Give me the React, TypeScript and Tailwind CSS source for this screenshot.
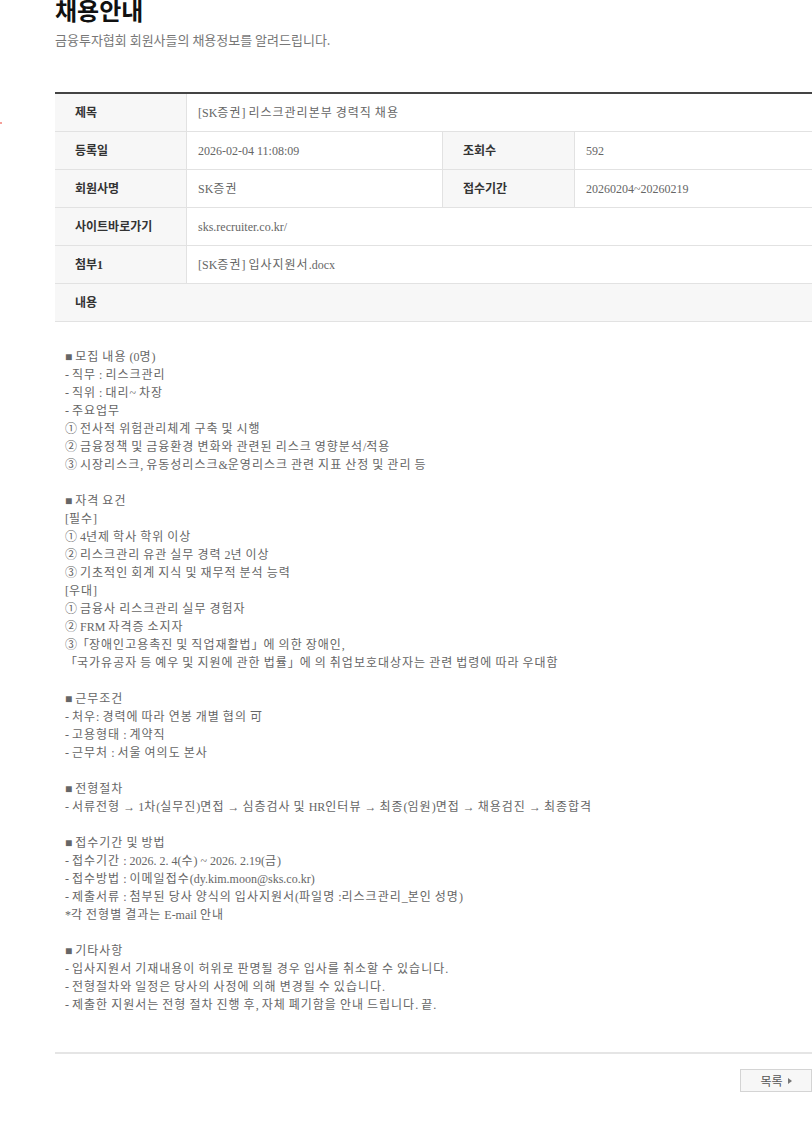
import React from 'react';

const serif = "font-['Liberation_Serif','Noto_Sans_CJK_KR',serif]";

const bodyLines: string[] = [
    '■ 모집 내용 (0명)',
    '- 직무 : 리스크관리',
    '- 직위 : 대리~ 차장',
    '- 주요업무',
    '① 전사적 위험관리체계 구축 및 시행',
    '② 금융정책 및 금융환경 변화와 관련된 리스크 영향분석/적용',
    '③ 시장리스크, 유동성리스크&운영리스크 관련 지표 산정 및 관리 등',
    '',
    '■ 자격 요건',
    '[필수]',
    '① 4년제 학사 학위 이상',
    '② 리스크관리 유관 실무 경력 2년 이상',
    '③ 기초적인 회계 지식 및 재무적 분석 능력',
    '[우대]',
    '① 금융사 리스크관리 실무 경험자',
    '② FRM 자격증 소지자',
    '③「장애인고용촉진 및 직업재활법」에 의한 장애인,',
    '「국가유공자 등 예우 및 지원에 관한 법률」에 의 취업보호대상자는 관련 법령에 따라 우대함',
    '',
    '■ 근무조건',
    '- 처우: 경력에 따라 연봉 개별 협의 可',
    '- 고용형태 : 계약직',
    '- 근무처 : 서울 여의도 본사',
    '',
    '■ 전형절차',
    '- 서류전형 → 1차(실무진)면접 → 심층검사 및 HR인터뷰 → 최종(임원)면접 → 채용검진 → 최종합격',
    '',
    '■ 접수기간 및 방법',
    '- 접수기간 : 2026. 2. 4(수) ~ 2026. 2.19(금)',
    '- 접수방법 : 이메일접수(dy.kim.moon@sks.co.kr)',
    '- 제출서류 : 첨부된 당사 양식의 입사지원서(파일명 :리스크관리_본인 성명)',
    '*각 전형별 결과는 E-mail 안내',
    '',
    '■ 기타사항',
    '- 입사지원서 기재내용이 허위로 판명될 경우 입사를 취소할 수 있습니다.',
    '- 전형절차와 일정은 당사의 사정에 의해 변경될 수 있습니다.',
    '- 제출한 지원서는 전형 절차 진행 후, 자체 폐기함을 안내 드립니다. 끝.',
];

// korean runs are set a bit looser than the latin text around them
const Ko = ({ text }: { text: string }) => (
    <span>
        {text.split(/([\uAC00-\uD7A3\u3131-\u318E\u4E00-\u9FFF]+)/).map((part, i) =>
            i % 2 === 1 ? (
                <span key={i} className="tracking-[1px]">{part}</span>
            ) : (
                <React.Fragment key={i}>{part}</React.Fragment>
            )
        )}
    </span>
);

const Label = ({ children }: { children: React.ReactNode }) => (
    <div className="w-[132px] shrink-0 bg-[#f7f7f7] pl-[20px] flex items-center font-bold text-[#333] border-r border-[#e2e2e2]">
        {children}
    </div>
);

const Value = ({ text, grow = false }: { text: string; grow?: boolean }) => (
    <div className={`${grow ? 'flex-1' : 'w-[255px] shrink-0'} pl-[11px] flex items-center text-[#666] whitespace-pre`}>
        <Ko text={text} />
    </div>
);

const Row = ({ children }: { children: React.ReactNode }) => (
    <div className="flex h-[38px] border-b border-[#e2e2e2]">{children}</div>
);

const App = () => {
    return (
        <div className="w-[812px] min-h-[1147px] bg-white overflow-hidden relative">
            <span className="absolute left-0 top-[122px] w-[2px] h-[2px] bg-[#f5a09a]" />
            <div className="ml-[55px] w-[757px]">
                <h1 className="text-[24px] leading-[24px] -mt-[2px] font-bold text-[#111] font-['Noto_Sans_CJK_KR',sans-serif]">
                    채용안내
                </h1>
                <p className="mt-[9px] text-[13px] leading-[18px] text-[#777] font-['Noto_Sans_CJK_KR',sans-serif]">
                    금융투자협회 회원사들의 채용정보를 알려드립니다.
                </p>

                <div className={`mt-[43px] border-t-2 border-[#444] text-[12px] ${serif}`}>
                    <Row>
                        <Label>제목</Label>
                        <Value grow text="[SK증권] 리스크관리본부 경력직 채용" />
                    </Row>
                    <Row>
                        <Label>등록일</Label>
                        <Value text="2026-02-04 11:08:09" />
                        <div className="border-l border-[#e2e2e2]" />
                        <Label>조회수</Label>
                        <Value grow text="592" />
                    </Row>
                    <Row>
                        <Label>회원사명</Label>
                        <Value text="SK증권" />
                        <div className="border-l border-[#e2e2e2]" />
                        <Label>접수기간</Label>
                        <Value grow text="20260204~20260219" />
                    </Row>
                    <Row>
                        <Label>사이트바로가기</Label>
                        <Value grow text="sks.recruiter.co.kr/" />
                    </Row>
                    <Row>
                        <Label>첨부1</Label>
                        <Value grow text="[SK증권] 입사지원서.docx" />
                    </Row>
                    <div className="flex h-[38px] border-b border-[#e2e2e2] bg-[#f7f7f7] pl-[20px] items-center font-bold text-[#333]">
                        내용
                    </div>

                    <div className="pt-[26px] pb-[38px] pl-[10px] text-[#666] leading-[18px]">
                        {bodyLines.map((line, i) => (
                            <div key={i} className="h-[18px] whitespace-pre">
                                <Ko text={line} />
                            </div>
                        ))}
                    </div>
                    <div className="border-t-2 border-[#e5e5e5]" />
                </div>

                <div className="flex justify-end mt-[15px]">
                    <button className="h-[23px] w-[72px] border border-[#d4d4d4] bg-[#f7f7f7] flex items-center justify-center gap-[5px] text-[12px] text-[#555] font-['Noto_Sans_CJK_KR',sans-serif]">
                        목록
                        <svg width="4" height="6" viewBox="0 0 4 6">
                            <path d="M0 0 L4 3 L0 6 Z" fill="#777" />
                        </svg>
                    </button>
                </div>
            </div>
        </div>
    );
};

export default App;
